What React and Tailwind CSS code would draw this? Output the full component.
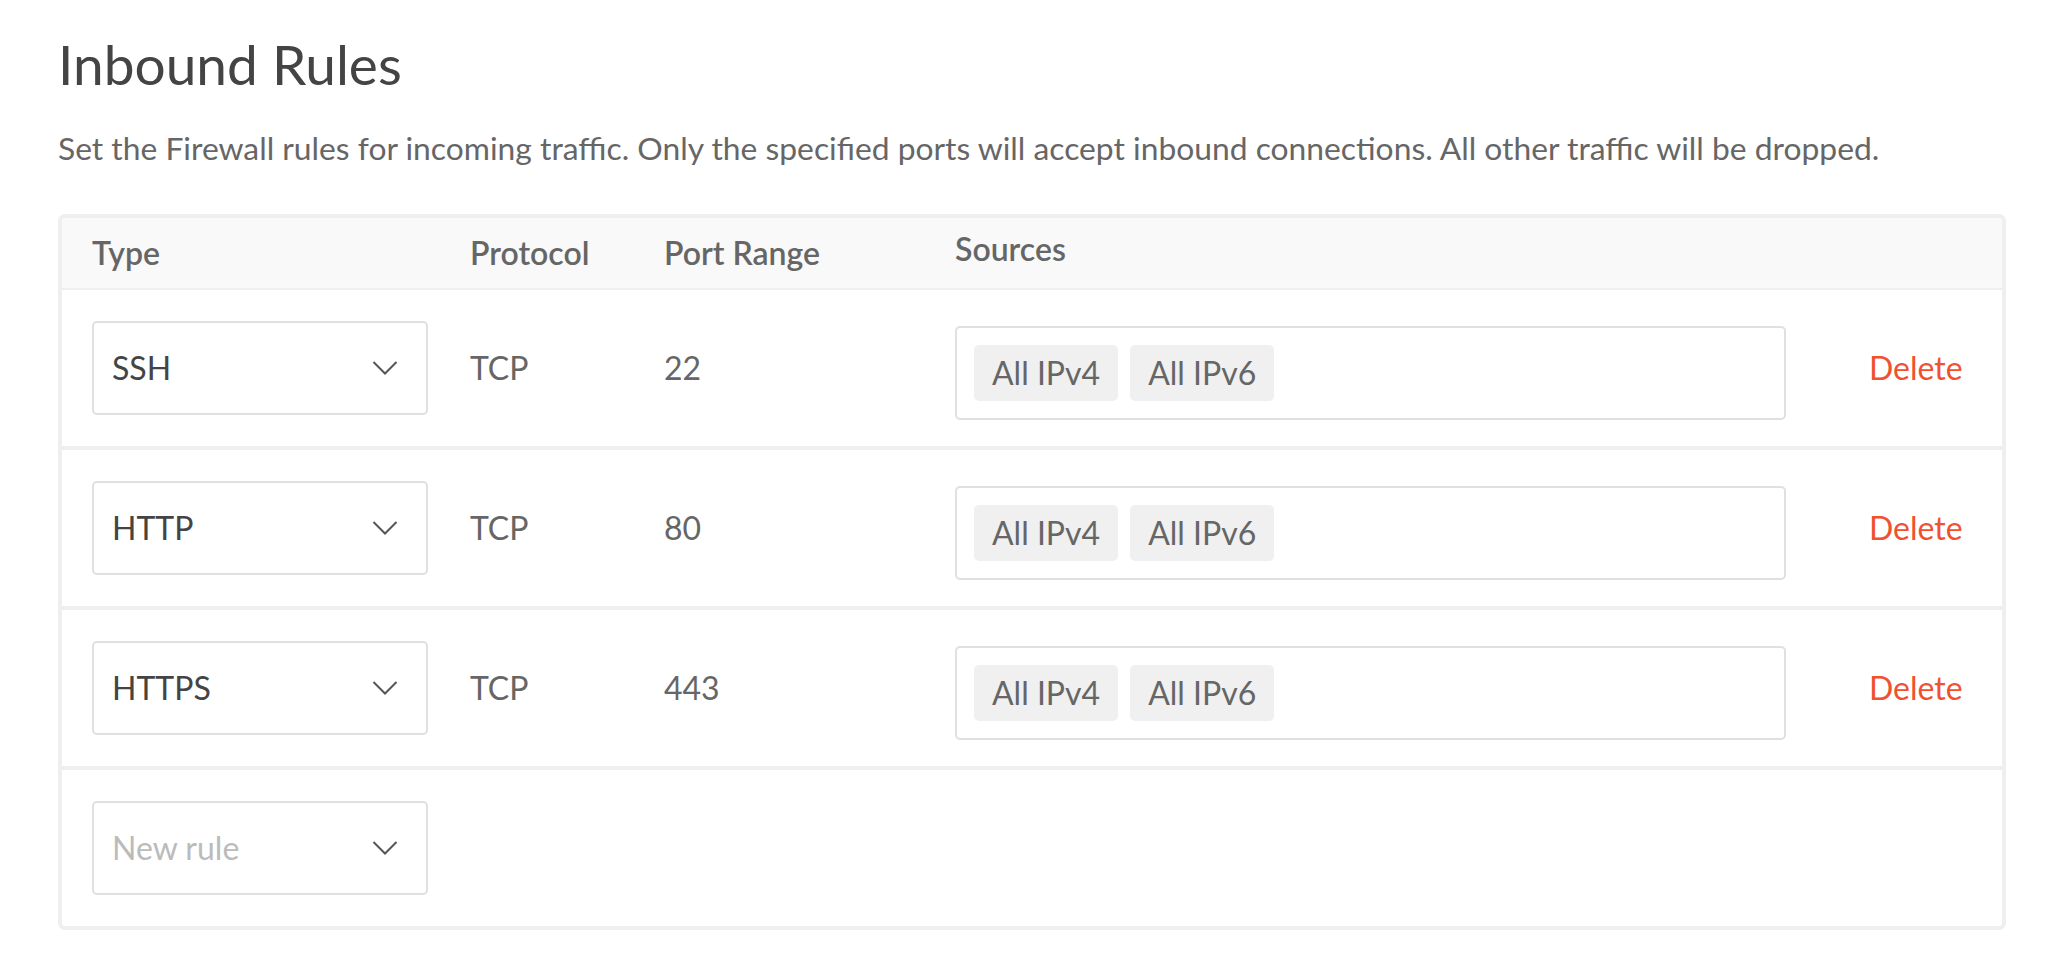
import React from 'react';

const rules = [
  { type: 'SSH', protocol: 'TCP', port: '22' },
  { type: 'HTTP', protocol: 'TCP', port: '80' },
  { type: 'HTTPS', protocol: 'TCP', port: '443' },
];

const Chevron = () => (
  <svg width="26" height="16" viewBox="0 0 26 16" fill="none" className="shrink-0">
    <polyline points="1.5,2 13,13.5 24.5,2" stroke="#555" strokeWidth="2" />
  </svg>
);

const TypeSelect = ({ value, placeholder }) => (
  <div className="flex h-[94px] w-[336px] items-center justify-between rounded-[5px] border-2 border-[#e0e0e0] bg-white pl-[18px] pr-[28px]">
    <span className={value ? 'text-[#444]' : 'text-[#bbb]'}>{value || placeholder}</span>
    <Chevron />
  </div>
);

const Tag = ({ children }) => (
  <span className="flex h-[56px] items-center rounded-[5px] bg-[#f0f0f0] px-[18px] text-[#666]">{children}</span>
);

const cols = 'grid grid-cols-[378px_194px_291px_831px_1fr] pl-[30px]';

export default function App() {
  return (
    <div className="min-h-screen bg-white font-['Lato',sans-serif] text-[#444]">
      <div className="ml-[58px] w-[1948px] pt-[34px]">
        {/* heading + intro */}
        <h1 className="text-[55px] leading-[60px] text-[#444]">Inbound Rules</h1>
        <p className="mt-[34px] text-[31.8px] leading-[40px] text-[#666]">
          Set the Firewall rules for incoming traffic. Only the specified ports will accept inbound connections. All other traffic will be dropped.
        </p>

        {/* rules table */}
        <div className="mt-[46px] overflow-hidden rounded-[7px] border-4 border-[#efefef] text-[32px]">
          <div className={`${cols} h-[72px] items-center border-b-2 border-[#efefef] bg-[#f9f9f9] font-semibold text-[#666]`}>
            <span>Type</span>
            <span>Protocol</span>
            <span>Port Range</span>
            <span className="-mt-[8px]">Sources</span>
            <span />
          </div>

          {rules.map((r) => (
            <div key={r.type} className={`${cols} h-[160px] items-center border-b-4 border-[#efefef] text-[#666]`}>
              <TypeSelect value={r.type} />
              <span>{r.protocol}</span>
              <span>{r.port}</span>
              <div className="mt-[10px] flex h-[94px] items-center gap-[12px] rounded-[5px] border-2 border-[#e0e0e0] pl-[17px]">
                <Tag>All IPv4</Tag>
                <Tag>All IPv6</Tag>
              </div>
              <button className="pl-[83px] text-left text-[#f0512f]">Delete</button>
            </div>
          ))}

          <div className={`${cols} h-[156px] items-center`}>
            <TypeSelect placeholder="New rule" />
          </div>
        </div>
      </div>
    </div>
  );
}
